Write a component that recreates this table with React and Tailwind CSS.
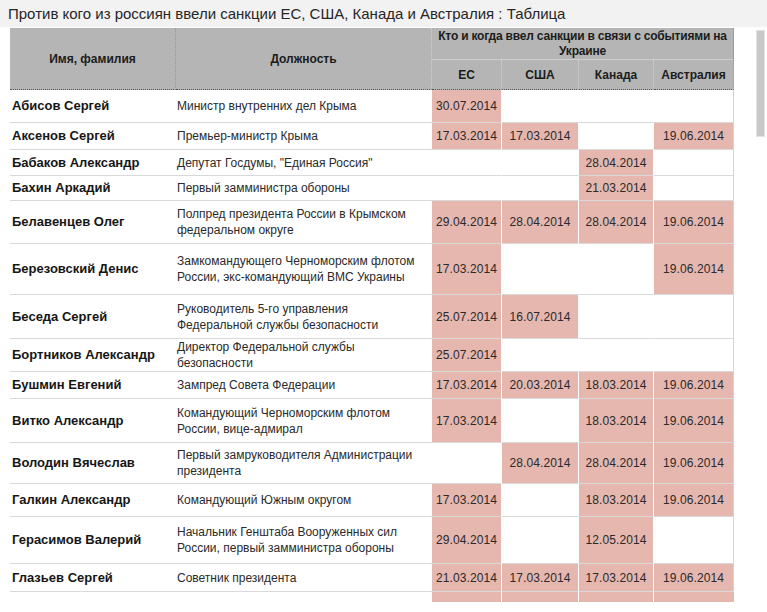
const rows = [
  ["Абисов Сергей", "Министр внутренних дел Крыма", ["30.07.2014", "", "", ""], 33],
  ["Аксенов Сергей", "Премьер-министр Крыма", ["17.03.2014", "17.03.2014", "", "19.06.2014"], 27],
  ["Бабаков Александр", 'Депутат Госдумы, "Единая Россия"', ["", "", "28.04.2014", ""], 26],
  ["Бахин Аркадий", "Первый замминистра обороны", ["", "", "21.03.2014", ""], 25],
  ["Белавенцев Олег", "Полпред президента России в Крымском федеральном округе", ["29.04.2014", "28.04.2014", "28.04.2014", "19.06.2014"], 43],
  ["Березовский Денис", "Замкомандующего Черноморским флотом России, экс-командующий ВМС Украины", ["17.03.2014", "", "", "19.06.2014"], 51],
  ["Беседа Сергей", "Руководитель 5-го управления Федеральной службы безопасности", ["25.07.2014", "16.07.2014", "", ""], 44],
  ["Бортников Александр", "Директор Федеральной службы безопасности", ["25.07.2014", "", "", ""], 30],
  ["Бушмин Евгений", "Зампред Совета Федерации", ["17.03.2014", "20.03.2014", "18.03.2014", "19.06.2014"], 27],
  ["Витко Александр", "Командующий Черноморским флотом России, вице-адмирал", ["17.03.2014", "", "18.03.2014", "19.06.2014"], 44],
  ["Володин Вячеслав", "Первый замруководителя Администрации президента", ["", "28.04.2014", "28.04.2014", "19.06.2014"], 41],
  ["Галкин Александр", "Командующий Южным округом", ["17.03.2014", "", "18.03.2014", "19.06.2014"], 33],
  ["Герасимов Валерий", "Начальник Генштаба Вооруженных сил России, первый замминистра обороны", ["29.04.2014", "", "12.05.2014", ""], 47],
  ["Глазьев Сергей", "Советник президента", ["21.03.2014", "17.03.2014", "17.03.2014", "19.06.2014"], 28],
];

const font = { fontFamily: '"Liberation Sans", Arial, sans-serif' };

function DateCell({ value, last }) {
  const pink = value !== "";
  return (
    <td
      className={
        "border-b border-b-[#d9d9d9] text-center align-middle text-[12px] tracking-[0.1px] text-[#2a2a2a] " +
        (pink ? "bg-[#e6b7af] " : "") +
        (last ? "border-r border-r-[#d4d4d4]" : "border-r border-r-white")
      }
    >
      {value}
    </td>
  );
}

export default function App() {
  return (
    <div className="w-[767px] h-[612px] overflow-hidden bg-white" style={font}>
      <div className="h-[27px] bg-[#f2f2f2] pl-[8px] pt-[5px] text-[15px] leading-[18px] text-[#262626]">
        Против кого из россиян ввели санкции ЕС, США, Канада и Австралия : Таблица
      </div>
      <div className="flex pl-[10px] pt-[1px]">
        <table className="w-[724px] table-fixed border-separate border-spacing-0">
          <colgroup>
            <col className="w-[166px]" />
            <col className="w-[256px]" />
            <col className="w-[70px]" />
            <col className="w-[77px]" />
            <col className="w-[75px]" />
            <col className="w-[80px]" />
          </colgroup>
          <thead>
            <tr className="h-[32px]">
              <th rowSpan={2} className="bg-[#b5b5b5] border-r border-r-[#979797] border-b border-b-[#555] border-dotted text-[12px] font-bold text-[#1c1c1c]">
                Имя, фамилия
              </th>
              <th rowSpan={2} className="bg-[#b5b5b5] border-r border-r-[#cfcfcf] border-b border-b-[#555] border-dotted text-[12px] font-bold text-[#1c1c1c]">
                Должность
              </th>
              <th colSpan={4} className="bg-[#b5b5b5] border-b border-b-[#cfcfcf] border-r border-r-[#9a9a9a] whitespace-nowrap text-[12px] leading-[15px] tracking-[-0.2px] font-bold text-[#1c1c1c]">
                Кто и когда ввел санкции в связи с событиями на
                <br />
                Украине
              </th>
            </tr>
            <tr className="h-[30px]">
              {["ЕС", "США", "Канада", "Австралия"].map((c, i) => (
                <th
                  key={c}
                  className={
                    "bg-[#b5b5b5] border-b border-dotted border-b-[#555] text-[12px] font-bold text-[#1c1c1c] " +
                    (i === 3 ? "border-r border-r-[#9a9a9a]" : "border-r border-r-[#cfcfcf]")
                  }
                >
                  {c}
                </th>
              ))}
            </tr>
          </thead>
          <tbody>
            {rows.map(([name, post, dates, h]) => (
              <tr key={name} style={{ height: h }}>
                <td className="border-b border-b-[#d9d9d9] pl-[2px] align-middle text-[13px] font-bold text-[#161616]">
                  {name}
                </td>
                <td className="border-b border-b-[#d9d9d9] pl-[1px] pr-2 align-middle text-[12px] leading-[16px] text-[#2a2a2a]">
                  {post}
                </td>
                {dates.map((d, i) => (
                  <DateCell key={i} value={d} last={i === 3} />
                ))}
              </tr>
            ))}
            <tr className="h-[10px]">
              <td />
              <td />
              <td className="bg-[#e6b7af] border-r border-r-white" />
              <td className="bg-[#e6b7af] border-r border-r-white" />
              <td className="bg-[#e6b7af] border-r border-r-white" />
              <td className="bg-[#e6b7af]" />
            </tr>
          </tbody>
        </table>
        <div className="ml-[22px] mt-[2px] h-[107px] w-[9px] shrink-0 border border-[#e2e2e2] bg-[#c8c8c8]" />
      </div>
    </div>
  );
}
